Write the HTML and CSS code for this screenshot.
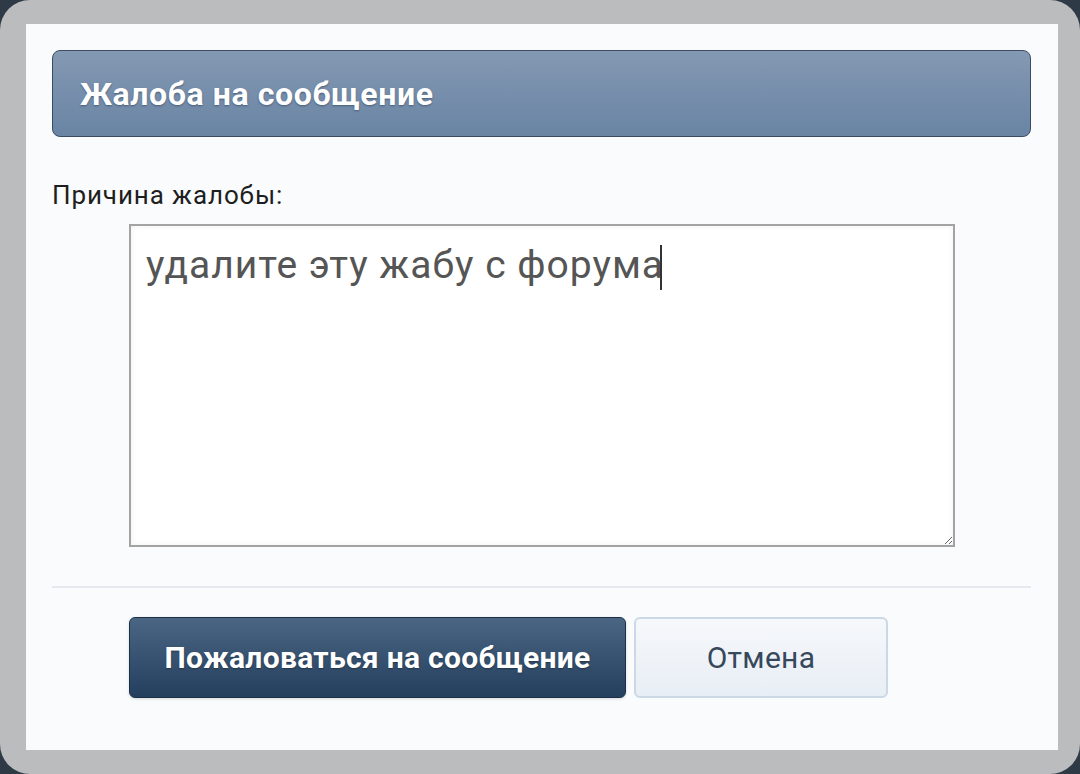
FILE: index.html
```html
<!DOCTYPE html>
<html lang="ru">
<head>
<meta charset="UTF-8" />
<meta name="viewport" content="width=device-width, initial-scale=1" />
<title>Жалоба на сообщение</title>
<link rel="stylesheet" href="styles.css">
</head>
<body>

<div class="screen">
  <div class="overlay">
    <h2 class="overlay-title">Жалоба на сообщение</h2>

    <form class="report-form" onsubmit="return false">
      <label class="field-label" for="reason">Причина жалобы:</label>
      <div class="field-wrap">
        <textarea id="reason" class="field-input">удалите эту жабу с форума</textarea>
        <!-- caret stand-in, headless capture doesn't paint the real one -->
        <span class="caret"></span>
      </div>

      <div class="form-footer">
        <button type="submit" class="btn btn-primary">Пожаловаться на сообщение</button>
        <button type="button" class="btn btn-cancel">Отмена</button>
      </div>
    </form>
  </div>
</div>

</body>
</html>
```

FILE: styles.css
```css
html, body {
  margin: 0;
  height: 100%;
  background: #2f3a47;
}
body {
  font-family: Roboto, "Noto Sans", Arial, sans-serif;
  color: #222;
}
.screen {
  box-sizing: border-box;
  height: 774px;
  padding: 24px 22px 24px 26px;
  background: #bbbcbd;
  border-radius: 30px;
}
.overlay {
  box-sizing: border-box;
  height: 100%;
  padding: 26px 27px 0 26px;
  background: #f9fbfd;
}
.overlay-title {
  margin: 0;
  box-sizing: border-box;
  height: 87px;
  padding-left: 27px;
  display: flex;
  align-items: center;
  font-size: 32px;
  letter-spacing: 0.6px;
  font-weight: 700;
  color: #fff;
  text-shadow: 0 1px 2px rgba(20, 35, 55, 0.45);
  background: linear-gradient(to bottom, #8499b3, #6984a4);
  border: 1px solid #3b4c62;
  border-radius: 8px;
}
.report-form {
  display: flex;
  flex-direction: column;
}
.field-label {
  margin-top: 43px;
  font-size: 26px;
  letter-spacing: 0.9px;
  line-height: 30px;
  color: #1e1e1e;
}
.field-wrap {
  position: relative;
  margin: 14px 0 0 77px;
  width: 826px;
  height: 323px;
}
.field-input {
  display: block;
  box-sizing: border-box;
  margin: 0;
  width: 100%;
  height: 100%;
  padding: 16px 15px 12px;
  font-family: Roboto, "Noto Sans", Arial, sans-serif;
  font-size: 39px;
  letter-spacing: 1px;
  line-height: 1.2;
  color: #555;
  background: #fff;
  border: 2px solid #a3a3a3;
  border-radius: 0;
  box-shadow: inset 0 0 6px rgba(0, 0, 0, 0.06);
  outline: none;
}
.caret {
  position: absolute;
  left: 531px;
  top: 21px;
  width: 2px;
  height: 45px;
  background: #333;
}
.form-footer {
  margin-top: 39px;
  padding: 29px 0 0 77px;
  border-top: 2px solid #e5e9ef;
  display: flex;
  gap: 8px;
}
.btn {
  box-sizing: border-box;
  height: 81px;
  font-family: Roboto, "Noto Sans", Arial, sans-serif;
  font-size: 30px;
  letter-spacing: 0.3px;
  border-radius: 6px;
  cursor: pointer;
}
.btn-primary {
  width: 497px;
  font-weight: 700;
  color: #fff;
  text-shadow: 0 1px 2px rgba(0, 0, 0, 0.35);
  background: linear-gradient(to bottom, #4b6683, #243f5e);
  border: 1px solid #1c3149;
  box-shadow: 0 1px 3px rgba(0, 0, 0, 0.15);
}
.btn-cancel {
  width: 254px;
  color: #36485c;
  background: linear-gradient(to bottom, #f6f8fb, #e8eef5);
  border: 2px solid #cbd8e5;
}
```
